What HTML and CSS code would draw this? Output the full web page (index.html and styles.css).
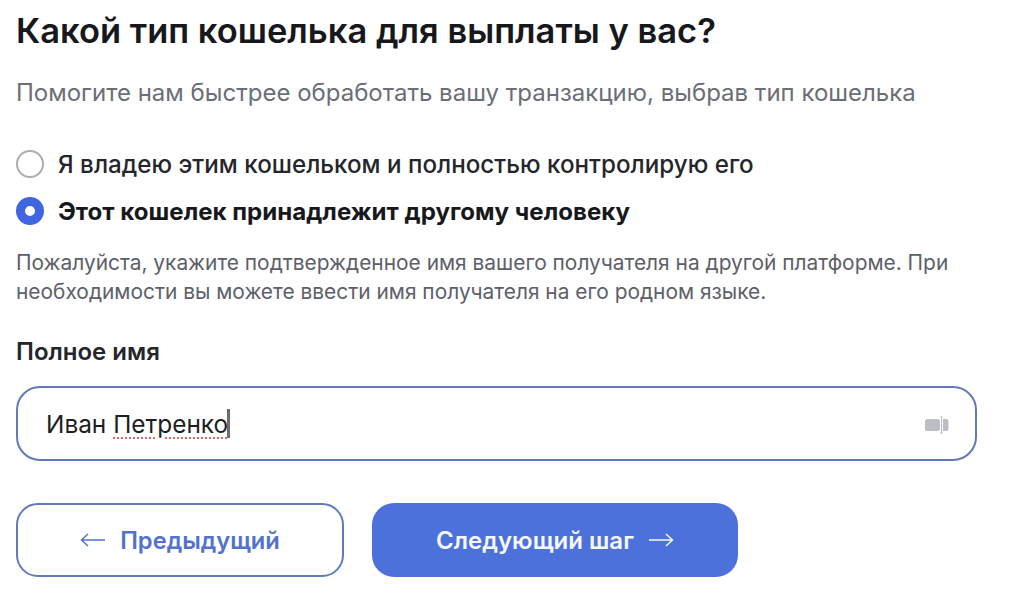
FILE: index.html
```
<!DOCTYPE html>
<html lang="ru">
<head>
<meta charset="utf-8">
<title>Тип кошелька</title>
<link rel="stylesheet" href="styles.css">
</head>
<body>
<main class="form">
  <h1 class="title">Какой тип кошелька для выплаты у вас?</h1>
  <p class="lead">Помогите нам быстрее обработать вашу транзакцию, выбрав тип кошелька</p>
  <div class="options">
    <div class="option"><span class="radio"></span><span>Я владею этим кошельком и полностью контролирую его</span></div>
    <div class="option option-on"><span class="radio radio-on"></span><span>Этот кошелек принадлежит другому человеку</span></div>
  </div>
  <p class="note">Пожалуйста, укажите подтвержденное имя вашего получателя на другой платформе. При необходимости вы можете ввести имя получателя на его родном языке.</p>
  <div class="label">Полное имя</div>
  <div class="field">
    <span class="value"><span>Иван </span><span class="misspelt">Петренко</span><span class="caret"></span></span>
    <svg class="field-icon" width="26" height="20" viewBox="0 0 26 20" aria-hidden="true">
      <rect x="1" y="5" width="15" height="12" rx="2.5" fill="#bcbec4"/>
      <path d="M19 5h3.500a2 2 0 0 1 2 2v8a2 2 0 0 1-2 2H19z" fill="#bcbec4"/>
      <path d="M17.500 3v16M16.300 3h2.400M16.300 19h2.400" stroke="#a9abb2" stroke-width=".8" fill="none"/>
    </svg>
  </div>
  <div class="actions">
    <button class="btn btn-back" type="button">
      <svg width="26" height="16" viewBox="0 0 26 16" aria-hidden="true"><path d="M25 8H1.500M8 2 1.500 8 8 14" fill="none" stroke="currentColor" stroke-width="1.500"/></svg>
      <span>Предыдущий</span>
    </button>
    <button class="btn btn-next" type="button">
      <span>Следующий шаг</span>
      <svg width="26" height="16" viewBox="0 0 26 16" aria-hidden="true"><path d="M1 8h23.500M18 2l6.500 6-6.500 6" fill="none" stroke="currentColor" stroke-width="1.500"/></svg>
    </button>
  </div>
</main>
</body>
</html>
```

FILE: styles.css
```
html, body { margin: 0; padding: 0; background: #fff; }
body { width: 1024px; height: 594px; overflow: hidden; font-family: Inter, "Liberation Sans", sans-serif; color: #17181c; }
.form { width: 961px; padding: 13px 0 0 16px; }
.title { margin: 0; font-size: 34.500px; line-height: 36px; font-weight: 600; letter-spacing: 0; }
.lead { margin: 28px 0 0; font-size: 24px; line-height: 32px; color: #6b6e76; font-weight: 400; }
.options { margin-top: 41px; display: flex; flex-direction: column; gap: 19px; }
.option { display: flex; align-items: center; gap: 14px; height: 28px; font-size: 24.200px; font-weight: 500; color: #24262b; }
.option-on { font-size: 24.100px; font-weight: 700; color: #17181c; }
.radio { box-sizing: border-box; width: 28px; height: 28px; border-radius: 50%; border: 2px solid #aeaeb0; background: #fff; flex: none; }
.radio-on { border: 9px solid #3f66e0; }
.note { margin: 23px 0 0; font-size: 20.900px; line-height: 29px; color: #5d6068; }
.label { margin-top: 31px; font-size: 24px; line-height: 30px; font-weight: 600; color: #24262b; }
.field { box-sizing: border-box; margin-top: 19px; height: 75px; border: 2px solid #6279bb; border-radius: 24px; display: flex; align-items: center; justify-content: space-between; padding: 0 25px 0 28px; }
.value { display: flex; align-items: center; font-size: 24.400px; color: #1d1e22; white-space: pre; }
.misspelt { text-decoration: underline dotted #d9686a 2px; text-underline-offset: 5px; }
.caret { width: 3px; height: 29px; margin-left: -1px; background: #6b6d72; }
.field-icon { flex: none; }
.actions { margin-top: 42px; display: flex; gap: 28px; }
.btn { box-sizing: border-box; height: 74px; border-radius: 22px; display: flex; align-items: center; justify-content: center; gap: 14px; font-family: inherit; font-size: 24px; font-weight: 600; cursor: pointer; }
.btn-back { width: 328px; background: #fff; border: 2px solid #6279bb; color: #5272cb; font-size: 23.700px; }
.btn-next { width: 366px; background: #4d71da; border: 0; color: #f6f8ff; }
```
